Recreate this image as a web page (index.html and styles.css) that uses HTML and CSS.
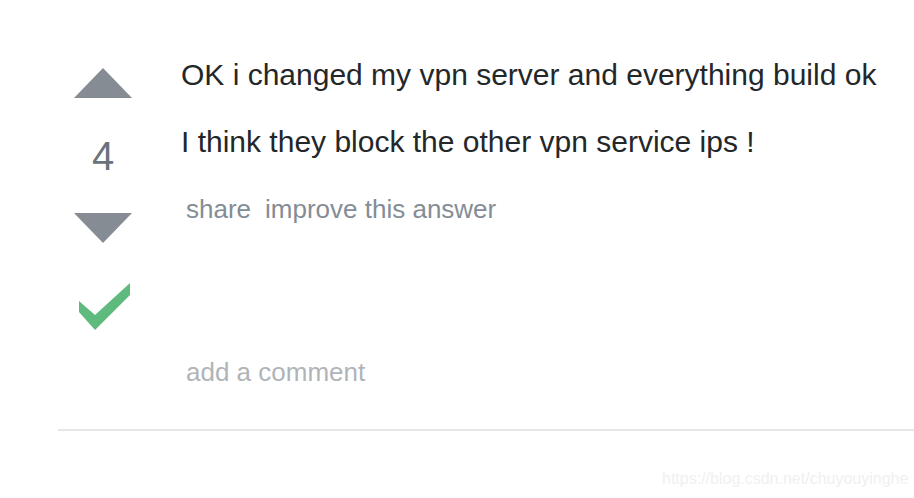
FILE: index.html
```html
<!DOCTYPE html>
<html>
<head>
<meta charset="utf-8">
<link rel="stylesheet" href="styles.css">
</head>
<body>
<div class="answer">
  <div class="votecell">
    <svg class="arrow-up" width="58" height="30" viewBox="0 0 58 30"><polygon points="0,30 58,30 29,0" fill="#858c93"/></svg>
    <div class="count">4</div>
    <svg class="arrow-down" width="58" height="30" viewBox="0 0 58 30"><polygon points="0,0 58,0 29,30" fill="#858c93"/></svg>
    <svg class="check" width="54" height="47" viewBox="0 0 54 47"><polygon points="3,18 19,32 54,0 54,12 19,47 3,29" fill="#5eba7d"/></svg>
  </div>
  <div class="postcell">
    <p class="line">OK i changed my vpn server and everything build ok</p>
    <p class="line second">I think they block the other vpn service ips !</p>
    <div class="menu"><a class="link">share</a><a class="link">improve this answer</a></div>
    <div class="comment">add a comment</div>
  </div>
</div>
<div class="watermark">https://blog.csdn.net/chuyouyinghe</div>
</body>
</html>
```
FILE: styles.css
```css
html, body {
  margin: 0;
  padding: 0;
  background: #fff;
  font-family: "Liberation Sans", Arial, sans-serif;
}
.answer {
  margin-left: 58px;
  display: flex;
  border-bottom: 2px solid #e4e6e8;
  height: 431px;
  box-sizing: border-box;
}
.votecell {
  width: 90px;
  display: flex;
  flex-direction: column;
  align-items: center;
}
.arrow-up { margin-top: 68px; display: block; }
.count {
  margin-top: 38px;
  font-size: 40px;
  line-height: 40px;
  color: #6a737c;
}
.arrow-down { margin-top: 37px; display: block; }
.check { margin-top: 40px; display: block; }
.postcell {
  padding-left: 33px;
  display: flex;
  flex-direction: column;
}
.line {
  margin: 57px 0 0 0;
  font-size: 30px;
  line-height: 36px;
  color: #242729;
}
.line.second { margin-top: 31px; }
.menu {
  margin-top: 34px;
  margin-left: 5px;
  display: flex;
  gap: 14px;
  font-size: 26px;
  line-height: 30px;
  color: #848d95;
}
.comment {
  margin-top: 133px;
  margin-left: 5px;
  font-size: 26px;
  line-height: 30px;
  color: #b0b4b8;
}
.watermark {
  position: absolute;
  left: 662px;
  top: 470px;
  font-size: 16px;
  color: #f0f0f0;
}
```
